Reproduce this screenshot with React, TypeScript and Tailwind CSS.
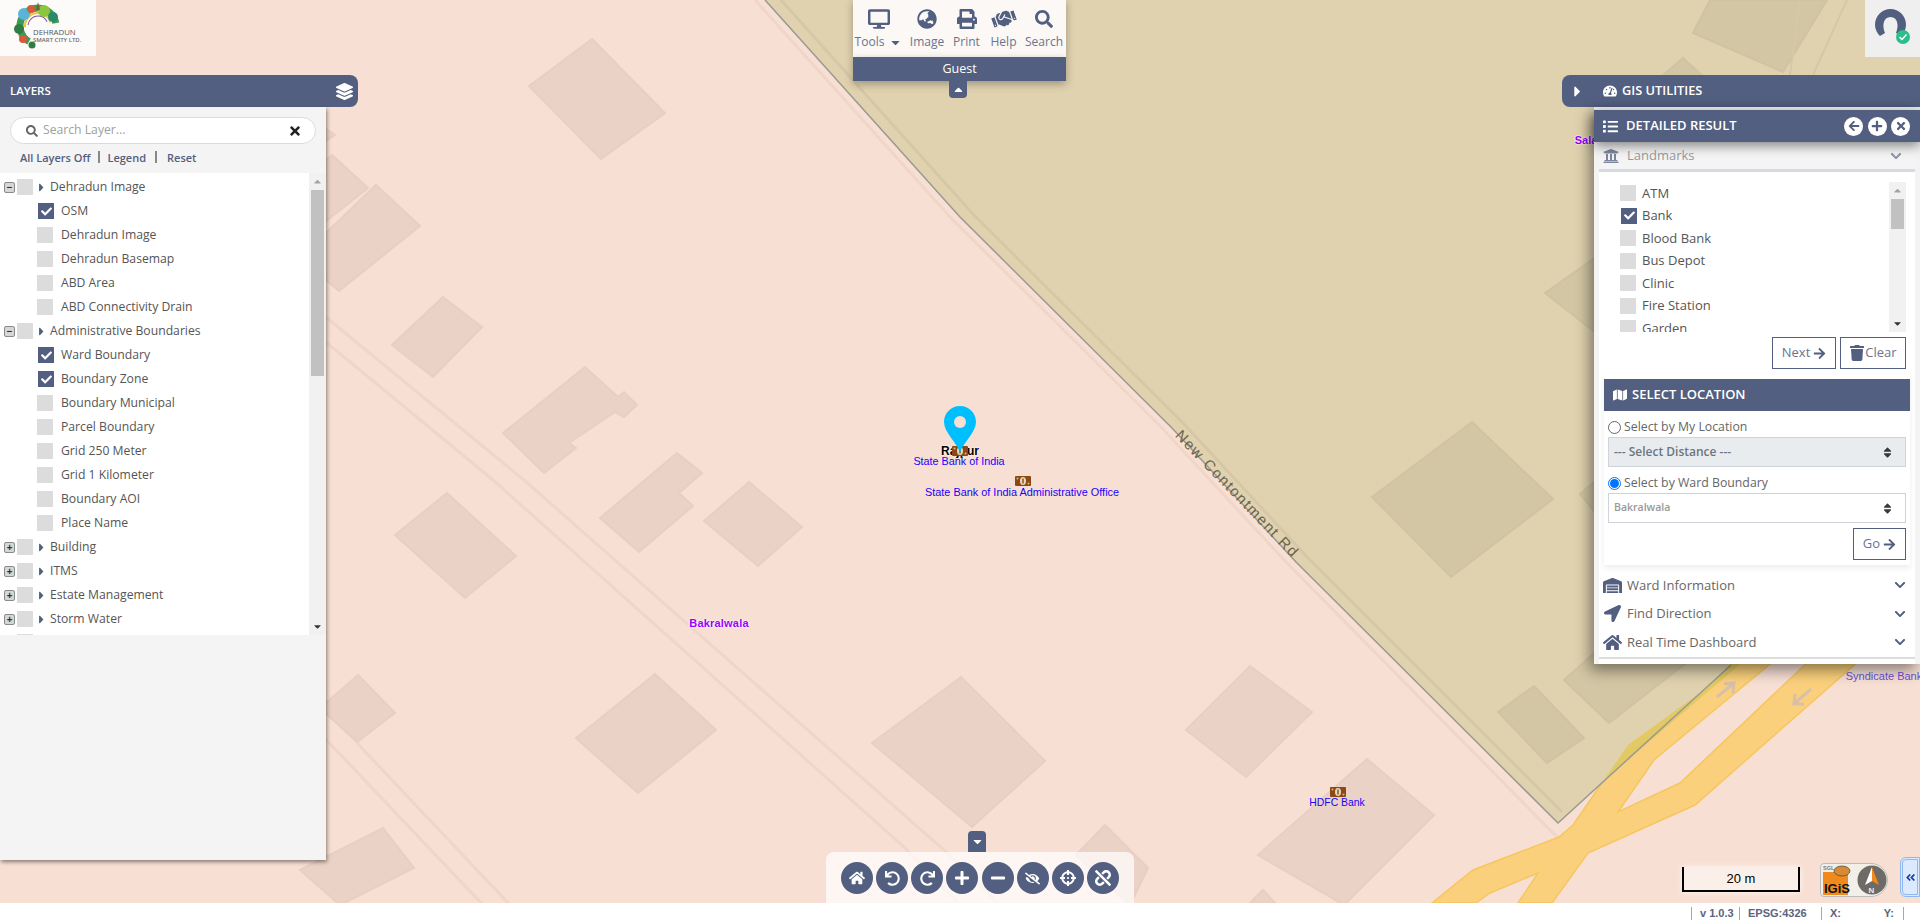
import {
  FaDesktop, FaGlobeAsia, FaPrint, FaHandshake, FaSearch, FaLayerGroup, FaTimes, FaCaretRight, FaCaretDown, FaCaretUp,
  FaCheck, FaTachometerAlt, FaList, FaArrowLeft, FaPlus, FaUniversity, FaChevronDown, FaArrowRight, FaTrash, FaMap,
  FaSort, FaWarehouse, FaLocationArrow, FaHome, FaUndo, FaRedo, FaMinus, FaEyeSlash, FaCrosshairs, FaUnlink, FaAngleDoubleLeft,
} from 'react-icons/fa';

const pinkBuildings = [
  '592,39 665,113 601,159 529,86',
  '332,155 368,188 325,222 290,190',
  '376,185 420,226 339,291 300,258',
  '320,125 335,135 320,145',
  '443,297 482,327 433,377 392,345',
  '585,367 618,397 624,392 637,405 624,417 615,412 569,443 576,448 544,473 503,433',
  '677,453 702,473 679,493 693,506 639,552 600,518',
  '749,482 802,527 758,566 704,521',
  '447,493 516,556 465,598 395,535',
  '655,674 716,730 638,793 576,738',
  '358,675 395,713 357,742 320,708',
  '383,828 414,868 340,905 300,870',
  '961,677 1045,761 972,827 872,743',
  '1250,666 1312,712 1246,777 1186,730',
  '1367,759 1434,815 1344,905 1258,855',
  '1105,825 1148,868 1130,905 1076,855',
  '1263,890 1275,903 1250,903',
];

const tanBuildings = [
  '1472,422 1553,499 1451,577 1372,497',
  '1545,293 1620,240 1650,310 1600,336',
  '1580,494 1620,460 1650,500 1610,530',
  '1534,686 1584,738 1547,763 1498,712',
  '1564,680 1609,723 1690,660 1620,630',
  '1710,0 1693,33 1783,72 1827,0',
  '1683,58 1660,78 1705,78',
];

const roadLines = [
  'M300,296 L327,318 L524,480 L944,850 L1000,905',
  'M300,321 L327,343 L493,480 L904,847 L960,905',
  'M357,743 L510,905',
  'M320,733 L483,905',
];

const rootLayers: [string, string[]][] = [
  ['Dehradun Image', ['*OSM', 'Dehradun Image', 'Dehradun Basemap', 'ABD Area', 'ABD Connectivity Drain']],
  ['Administrative Boundaries', ['*Ward Boundary', '*Boundary Zone', 'Boundary Municipal', 'Parcel Boundary', 'Grid 250 Meter', 'Grid 1 Kilometer', 'Boundary AOI', 'Place Name']],
  ['Building', []],
  ['ITMS', []],
  ['Estate Management', []],
  ['Storm Water', []],
];

const landmarks = ['ATM', '*Bank', 'Blood Bank', 'Bus Depot', 'Clinic', 'Fire Station', 'Garden'];

const Box = ({ checked }: { checked?: boolean }) => (
  <span className={`flex h-4 w-4 shrink-0 items-center justify-center ${checked ? '-mr-px ml-px bg-[#535f80]' : 'bg-[#dcdcdc]'}`}>
    {checked && <FaCheck className="text-[11px] text-white" />}
  </span>
);

const Expander = ({ open }: { open: boolean }) => (
  <span className="flex h-[11px] w-[11px] shrink-0 items-center justify-center rounded-[2px] border border-[#8a8a8a] bg-[#d6d6d6] text-[10px] leading-none font-bold text-[#333]">
    {open ? '−' : '+'}
  </span>
);

const MapLabel = ({ x, y, className, children }: { x: number; y: number; className: string; children: string }) => (
  <span
    className={`absolute -translate-x-1/2 -translate-y-1/2 font-['Liberation_Sans',Arial,sans-serif] whitespace-nowrap ${className}`}
    style={{ left: x, top: y }}
  >
    {children}
  </span>
);

const BankIcon = ({ x, y }: { x: number; y: number }) => (
  <svg className="absolute" style={{ left: x - 8, top: y - 5 }} width="16" height="10" viewBox="0 0 16 10">
    <rect width="16" height="10" rx="1" fill="#8a4a14" />
    <ellipse cx="8" cy="5" rx="3" ry="4" fill="#e9d8c0" />
    <rect x="7.3" y="2.5" width="1.4" height="5" fill="#8a4a14" />
    <circle cx="2.5" cy="2.5" r="1" fill="#d9b48c" />
    <circle cx="13.5" cy="7.5" r="1" fill="#d9b48c" />
  </svg>
);

const TopTool = ({ icon: Icon, label, size, caret, w }: { icon: any; label: string; size: string; caret?: boolean; w: string }) => (
  <div className={`flex flex-col items-center ${w}`}>
    <div className="flex h-[31px] items-center justify-center text-[#535f80]">
      <Icon className={size} />
    </div>
    <div className="flex items-center text-[12px] leading-[16px] text-[#6a7490]">
      {label}
      {caret && <FaCaretDown className="ml-[5px] text-[13px] text-[#535f80]" />}
    </div>
  </div>
);

const RoundButton = ({ icon: Icon, size = 'text-[16px]' }: { icon: any; size?: string }) => (
  <div className="flex h-8 w-8 items-center justify-center rounded-full bg-[#535f80] text-white">
    <Icon className={size} />
  </div>
);

const Accordion = ({ icon: Icon, label }: { icon: any; label: string }) => (
  <div className="flex h-[28.5px] items-center px-[4px] text-[13px] text-[#666]">
    <Icon className="w-[19px] text-[17px] text-[#535f80]" />
    <span className="ml-[5px] flex-1">{label}</span>
    <FaChevronDown className="mr-[5px] text-[12px] text-[#535f80]" />
  </div>
);

const LayersPanel = () => (
  <div className="absolute top-[75px] left-0 z-10 w-[358px]">
    <div className="flex h-8 items-center justify-between rounded-r-lg bg-[#535f80] pr-[5px] pl-[10px] text-[11.5px] font-semibold text-white">
      LAYERS
      <FaLayerGroup className="text-[17px]" />
    </div>
    <div className="flex h-[753px] w-[326px] flex-col bg-[#f4f4f4] shadow-[1px_2px_4px_rgba(0,0,0,0.45)]">
      <div className="mx-[10px] mt-[10px] flex h-[27px] w-[306px] items-center rounded-full border border-[#dcdcdc] bg-white pr-[13px] pl-[15px] text-[12.2px] text-[#a0a0a0]">
        <FaSearch className="mr-[5px] text-[12px] text-[#666]" />
        <span className="flex-1">Search Layer...</span>
        <FaTimes className="text-[14px] text-[#222]" />
      </div>
      <div className="mt-[3px] mb-[3px] flex h-[23px] items-center pl-[20px] text-[11px] font-semibold text-[#535f80]">
        <span>All Layers Off</span>
        <span className="mr-[7px] mb-[3px] ml-[8px] h-[12px] w-[2px] bg-[#888]" />
        <span>Legend</span>
        <span className="mr-[10px] mb-[3px] ml-[9px] h-[12px] w-[2px] bg-[#888]" />
        <span>Reset</span>
      </div>
      <div className="flex h-[462px] overflow-hidden bg-white">
        <div className="h-full flex-1 overflow-hidden pt-[2px]">
          {rootLayers.map(([name, children]) => (
            <div key={name}>
              <div className="flex h-6 items-center pl-[4px] text-[12.2px] text-[#555]">
                <Expander open={children.length > 0} />
                <span className="ml-[2px]"><Box /></span>
                <FaCaretRight className="ml-[5px] w-[7px] text-[13px] text-[#535f80]" />
                <span className="ml-[5px]">{name}</span>
              </div>
              {children.map((c) => (
                <div key={c} className="flex h-6 items-center pl-[37px] text-[12.2px] text-[#555]">
                  <Box checked={c.startsWith('*')} />
                  <span className="ml-2">{c.replace('*', '')}</span>
                </div>
              ))}
            </div>
          ))}
          {/* next group, only the top of its checkbox shows */}
          <div className="-mt-px flex h-6 items-center pl-[17px]"><Box /></div>
        </div>
        <div className="flex h-full w-[17px] flex-col items-center bg-[#f1f1f1]">
          <div className="flex h-[17px] items-center"><FaCaretUp className="text-[11px] text-[#a3a3a3]" /></div>
          <div className="h-[186px] w-[13px] bg-[#c1c1c1]" />
          <div className="flex-1" />
          <div className="flex h-[17px] items-center"><FaCaretDown className="text-[11px] text-[#333]" /></div>
        </div>
      </div>
    </div>
  </div>
);

const TopMenu = () => (
  <div className="absolute top-0 left-[853px] z-10 flex w-[213px] flex-col">
    <div className="h-[57px] bg-[#fbf8f5] shadow-[0_2px_8px_rgba(0,0,0,0.3)]">
      <div className="flex items-start pt-[3px] pl-[2px]">
        <TopTool icon={FaDesktop} label="Tools" size="text-[22px]" caret w="w-[47px]" />
        <TopTool icon={FaGlobeAsia} label="Image" size="text-[20px]" w="w-[50px]" />
        <TopTool icon={FaPrint} label="Print" size="text-[20px]" w="w-[29px]" />
        <TopTool icon={FaHandshake} label="Help" size="text-[24px] -rotate-[20deg]" w="w-[45px]" />
        <TopTool icon={FaSearch} label="Search" size="text-[18px]" w="w-[36px]" />
      </div>
    </div>
    <div className="flex h-6 items-center justify-center bg-[#535f80] text-[12.5px] text-white shadow-[0_3px_8px_rgba(0,0,0,0.3)]">Guest</div>
    <div className="ml-[96px] flex h-[17px] w-[18px] items-center justify-center rounded-b-[4px] bg-[#535f80] text-white">
      <FaCaretUp className="text-[13px]" />
    </div>
  </div>
);

const SelectBox = ({ label, muted }: { label: string; muted?: boolean }) => (
  <div className={`flex h-[30px] items-center border border-[#ced4da] pr-[11px] pl-[5px] font-semibold ${muted ? 'bg-[#e9ecef] text-[12px] text-[#6c757d]' : 'bg-white text-[10.5px] text-[#999]'}`}>
    <span className="flex-1">{label}</span>
    <FaSort className="text-[13px] text-[#343a40]" />
  </div>
);

const OutlineButton = ({ className, children }: { className: string; children: React.ReactNode }) => (
  <div className={`flex h-8 items-center justify-center border border-[#535f80] bg-white text-[13px] text-[#6a7490] ${className}`}>
    {children}
  </div>
);

const ResultPanel = () => (
  <div className="absolute top-[75px] left-[1562px] z-10 w-[358px]">
    <div className="flex h-8 items-center rounded-l-lg bg-[#535f80] text-[12.8px] font-semibold text-white">
      <FaCaretRight className="ml-[7px] text-[17px]" />
      <FaTachometerAlt className="ml-[17px] text-[14px]" />
      <span className="ml-[5px]">GIS UTILITIES</span>
    </div>
    <div className="ml-[32px] h-[557px] w-[326px] border-t-[3px] border-[#e8e8e8] bg-[#f3f3f3] shadow-[-4px_6px_14px_rgba(0,0,0,0.45)]">
      <div className="relative z-10 flex h-8 items-center bg-[#535f80] pr-[10px] pl-[9px] text-[13px] font-semibold text-white shadow-[0_4px_12px_rgba(0,0,0,0.45)]">
        <FaList className="text-[15px]" />
        <span className="ml-2 flex-1">DETAILED RESULT</span>
        <div className="flex gap-[4.5px]">
          {[FaArrowLeft, FaPlus, FaTimes].map((Icon, i) => (
            <span key={i} className="flex h-[19px] w-[19px] items-center justify-center rounded-full bg-white text-[#535f80]">
              <Icon className="text-[12px]" />
            </span>
          ))}
        </div>
      </div>
      <div className="mx-[5px] h-[522px] bg-white">
        <div className="flex h-[30px] items-center border-b-[3px] border-[#d5d9e2] bg-[#f4f4f5] pr-[13px] pl-[4px] text-[13px] text-[#999]">
          <FaUniversity className="text-[16px] text-[#7d859d]" />
          <span className="ml-2 flex-1">Landmarks</span>
          <FaChevronDown className="text-[12px] text-[#8a90a3]" />
        </div>
        <div className="mt-[10px] flex h-[150px] pl-[21px]">
          <div className="flex-1 overflow-hidden">
            {landmarks.map((l) => (
              <div key={l} className="flex h-[22.5px] items-center text-[13px] text-[#555]">
                <Box checked={l.startsWith('*')} />
                <span className="ml-[6px]">{l.replace('*', '')}</span>
              </div>
            ))}
          </div>
          <div className="mr-[9px] flex h-full w-[17px] flex-col items-center bg-[#f1f1f1]">
            <div className="flex h-[17px] items-center"><FaCaretUp className="text-[11px] text-[#a3a3a3]" /></div>
            <div className="h-[30px] w-[13px] bg-[#c1c1c1]" />
            <div className="flex-1" />
            <div className="flex h-[17px] items-center"><FaCaretDown className="text-[11px] text-[#333]" /></div>
          </div>
        </div>
        <div className="mt-[5px] flex justify-end gap-1 pr-[9px]">
          <OutlineButton className="w-16">Next<FaArrowRight className="ml-[3px] text-[13px] text-[#535f80]" /></OutlineButton>
          <OutlineButton className="w-[66px]"><FaTrash className="text-[16px] text-[#535f80]" />Clear</OutlineButton>
        </div>
        <div className="mx-[5px] mt-[5px] h-[191px] bg-white pt-[5px] shadow-[0_3px_6px_rgba(0,0,0,0.08)]">
          <div className="flex h-8 items-center bg-[#535f80] pl-[9px] text-[13px] font-semibold text-white">
            <FaMap className="text-[14px]" />
            <span className="ml-[5px]">SELECT LOCATION</span>
          </div>
          <div className="px-1">
            <div className="flex h-[26px] items-center pt-[6px] text-[12.3px] text-[#666]">
              <span className="h-[13px] w-[13px] rounded-full border border-[#666] bg-white" />
              <span className="ml-[3px]">Select by My Location</span>
            </div>
            <SelectBox label="--- Select Distance ---" muted />
            <div className="flex h-[26px] items-center pt-[6px] text-[12.3px] text-[#666]">
              <span className="flex h-[13px] w-[13px] items-center justify-center rounded-full border border-[#0075ff] bg-white">
                <span className="h-[9px] w-[9px] rounded-full bg-[#0075ff]" />
              </span>
              <span className="ml-[3px]">Select by Ward Boundary</span>
            </div>
            <SelectBox label="Bakralwala" />
            <div className="mt-[5px] flex justify-end">
              <OutlineButton className="w-[53px]">Go<FaArrowRight className="ml-[3px] text-[13px] text-[#535f80]" /></OutlineButton>
            </div>
          </div>
        </div>
        <div className="mt-[6px] border-b-2 border-[#ddd]">
          <Accordion icon={FaWarehouse} label="Ward Information" />
          <Accordion icon={FaLocationArrow} label="Find Direction" />
          <Accordion icon={FaHome} label="Real Time Dashboard" />
        </div>
      </div>
    </div>
  </div>
);

const MapLayer = () => (
  <svg className="absolute inset-0" width="1920" height="903" viewBox="0 0 1920 903">
    <rect width="1920" height="903" fill="#f7dfd3" />
    {roadLines.map((d) => (
      <path key={d} d={d} fill="none" stroke="#efd6c9" strokeWidth="3" />
    ))}
    {pinkBuildings.map((p) => (
      <polygon key={p} points={p} fill="#ebd2c6" stroke="#e8cfc2" strokeWidth="2" />
    ))}
    <path d="M755,0 L950,217 L1162,428 L1286,562 L1552,832 L1559,838" fill="none" stroke="#efd6c9" strokeWidth="3" />
    <path
      d="M1731,660 L1604,780 L1573,825 L1559,837 L1473,870 L1432,903 L1476,903 L1490,893 L1538,873 L1518,903 L1552,903 L1588,853 L1695,805 L1860,660 L1810,660 L1680,783 L1618,812 L1654,760 L1775,660 Z"
      fill="#fad07c"
      stroke="#f6c65f"
      strokeWidth="1.5"
    />
    <polygon points="765,0 960,217 1172,428 1296,562 1558,823 1920,494 1920,0" fill="#e0d2af" />
    {tanBuildings.map((p) => (
      <polygon key={p} points={p} fill="#d3c6a4" stroke="#d0c3a1" strokeWidth="2" />
    ))}
    <polygon points="1604,780 1628,745 1704,690 1735,660 1745,660" fill="#e2c964" />
    <path d="M781,0 L972,213 L1184,424 L1308,558 L1562,812" fill="none" stroke="#d6c8a6" strokeWidth="3" />
    <path d="M1847,0 L1813,75 M1800,0 L1790,75" fill="none" stroke="#d6c8a6" strokeWidth="2" />
    <polyline points="765,0 960,217 1172,428 1296,562 1558,823 1731,665" fill="none" stroke="#9a9a90" strokeWidth="1.5" />
    <path d="M1717,697 L1733,684 M1724,684 L1734,683 L1733,693" fill="none" stroke="#d9bfa9" strokeWidth="3" />
    <path d="M1811,689 L1795,703 M1795,694 L1794,704 L1804,704" fill="none" stroke="#d9bfa9" strokeWidth="3" />
  </svg>
);

const MapLabels = () => (
  <>
    <MapLabel x={960} y={451} className="text-[12px] font-bold text-black [text-shadow:0_0_2px_#fff,0_0_2px_#fff]">Rajpur</MapLabel>
    <BankIcon x={960} y={451} />
    <MapLabel x={959} y={461} className="text-[10.8px] text-[#2200ff]">State Bank of India</MapLabel>
    <svg className="absolute top-[405px] left-[943px]" width="34" height="48" viewBox="0 0 34 48">
      <path d="M17,47 C13,37 1,27 1,17 C1,8 8,1 17,1 C26,1 33,8 33,17 C33,27 21,37 17,47 Z" fill="#00bfff" />
      <circle cx="17" cy="17" r="6" fill="#f7dfd3" />
    </svg>
    <BankIcon x={1023} y={481} />
    <MapLabel x={1022} y={492} className="text-[10.9px] text-[#2200ff]">State Bank of India Administrative Office</MapLabel>
    <BankIcon x={1338} y={792} />
    <MapLabel x={1337} y={803} className="text-[10.4px] text-[#2200ff]">HDFC Bank</MapLabel>
    <MapLabel x={1884} y={676} className="text-[11px] text-[#6a50e0]">Syndicate Bank</MapLabel>
    <MapLabel x={719} y={623} className="text-[11px] font-bold tracking-[0.2px] text-[#9900ff] [text-shadow:0_0_2px_#fff,0_0_2px_#fff]">Bakralwala</MapLabel>
    <MapLabel x={1586} y={140} className="text-[11px] font-bold text-[#9900ff] [text-shadow:0_0_2px_#fff,0_0_2px_#fff]">Sala</MapLabel>
    <MapLabel x={1237} y={494} className="rotate-[46deg] text-[15px] tracking-[1.5px] text-[#6b6450]">New Contontment Rd</MapLabel>
  </>
);

const CityLogo = () => (
  <div className="absolute top-0 left-0 z-10 h-14 w-24 bg-[#fdfbf9]">
    <svg width="96" height="56" viewBox="0 0 96 56">
      <circle cx="38" cy="26" r="18" fill="none" stroke="#3d9a54" strokeWidth="7" strokeDasharray="72 50" transform="rotate(120 38 26)" />
      <circle cx="38" cy="26" r="13" fill="none" stroke="#e8c53c" strokeWidth="2" strokeDasharray="38 60" transform="rotate(175 38 26)" />
      <circle cx="38" cy="26" r="10" fill="none" stroke="#7a4fa0" strokeWidth="1" strokeDasharray="26 60" transform="rotate(185 38 26)" />
      <circle cx="24" cy="14" r="6" fill="#58b5d8" />
      <circle cx="31" cy="9" r="4" fill="#d75b3a" />
      <circle cx="44" cy="11" r="6" fill="#8cc63f" />
      <circle cx="53" cy="17" r="5" fill="#2c8a6b" />
      <circle cx="19" cy="29" r="5" fill="#2f7d44" />
      <circle cx="23" cy="39" r="4" fill="#d75b3a" />
      <circle cx="32" cy="45" r="3.5" fill="#2f7d44" />
      <path d="M38,2 L36,10 L40,10 Z" fill="#7a5b3d" />
      <text x="33" y="35" fontFamily="Open Sans, sans-serif" fontSize="7.8" fill="#55565a">DEHRADUN</text>
      <text x="33" y="41.5" fontFamily="Open Sans, sans-serif" fontSize="6" fontWeight="600" fill="#6a6b6f">SMART CITY LTD.</text>
    </svg>
  </div>
);

const Avatar = () => (
  <div className="absolute top-0 left-[1865px] z-10 h-[57px] w-[55px] bg-[#efefef]">
    <svg width="55" height="57" viewBox="0 0 55 57">
      <path d="M15,36 A15.5,15.5 0 1 1 36,36 L31,33 C34,26 33,17 25.5,17 C18,17 17,26 20,33 Z" fill="#535f80" />
      <circle cx="38" cy="37" r="7" fill="#2dbd8b" />
      <path d="M34.5,37 L37,39.5 L41.5,34.5" fill="none" stroke="#fff" strokeWidth="1.5" />
    </svg>
  </div>
);

const BottomToolbar = () => (
  <div className="absolute top-[831px] left-[826px] z-10 flex w-[308px] flex-col">
    <div className="ml-[142px] flex h-[21px] w-[18px] items-center justify-center rounded-t-[4px] bg-[#535f80] text-white">
      <FaCaretDown className="text-[13px]" />
    </div>
    <div className="flex h-[51px] w-full justify-center gap-[3.14px] rounded-t-lg bg-white/70 pt-[10px]">
      <RoundButton icon={FaHome} />
      <RoundButton icon={FaUndo} size="text-[15px]" />
      <RoundButton icon={FaRedo} size="text-[15px]" />
      <RoundButton icon={FaPlus} />
      <RoundButton icon={FaMinus} />
      <RoundButton icon={FaEyeSlash} size="text-[15px]" />
      <RoundButton icon={FaCrosshairs} />
      <RoundButton icon={FaUnlink} />
    </div>
  </div>
);

const MapFooter = () => (
  <div className="absolute top-[857px] left-[1682px] z-10 flex items-start font-['Liberation_Sans',Arial,sans-serif]">
    <div className="mt-[10px] flex h-[25px] w-[118px] items-center justify-center border-x-2 border-b-2 border-black bg-white/50 text-[13px] text-black shadow-[0_0_6px_rgba(255,255,255,0.8)]">
      20 m
    </div>
    <svg className="mt-[6px] ml-[20px]" width="68" height="34" viewBox="0 0 68 34">
      <path d="M4,0.5 L51,0.5 A16.5,16.5 0 0 1 51,33.5 L4,33.5 A3.5,3.5 0 0 1 0.5,30 L0.5,4 A3.5,3.5 0 0 1 4,0.5 Z" fill="#f2efe9" stroke="#bbb" />
      <path d="M3,9 L28,9 L28,32 L3,32 Z" fill="#f08a1c" />
      <text x="3" y="7" fontSize="5.5" fontWeight="bold" fill="#777">SGL</text>
      <ellipse cx="22" cy="8" rx="8" ry="5" fill="#d78a33" stroke="#444" strokeWidth="0.7" />
      <text x="4" y="30" fontSize="13" fontWeight="bold" fill="#111">IGiS</text>
      <circle cx="52" cy="17" r="14.5" fill="#6e6a66" />
      <polygon points="52,4 45,22 52,18" fill="#fff" />
      <polygon points="52,4 59,22 52,18" fill="#f08a1c" />
      <text x="48.5" y="30" fontSize="8" fontWeight="bold" fill="#eee">N</text>
    </svg>
    <div className="ml-3 flex h-10 w-5 items-center justify-center rounded-l-md border border-[#8fb8f0] bg-[#dceaff] text-[#1a3f9c] outline outline-1 -outline-offset-3 outline-[#8fb8f0]">
      <FaAngleDoubleLeft className="text-[11px]" />
    </div>
  </div>
);

const StatusBar = () => (
  <div className="flex h-[21px] items-center bg-white pl-[1691px] font-['Liberation_Sans',Arial,sans-serif] text-[11px] font-bold text-[#5a6480]">
    <span className="flex h-[13px] w-[48px] items-center border-l border-[#a8b560] pl-2 leading-none">v 1.0.3</span>
    <span className="flex h-[13px] w-[82px] items-center border-l border-[#a8b560] pl-2 leading-none">EPSG:4326</span>
    <span className="flex h-[13px] w-[83px] items-center justify-between border-x border-[#a8b560] pr-[9px] pl-2 leading-none">
      <span>X:</span>
      <span>Y:</span>
    </span>
  </div>
);

export default function App() {
  return (
    <div className="flex h-[924px] w-[1920px] flex-col overflow-hidden bg-white font-['Open_Sans',sans-serif]">
      <div className="relative h-[903px] overflow-hidden">
        <MapLayer />
        <MapLabels />
        <CityLogo />
        <Avatar />
        <TopMenu />
        <LayersPanel />
        <ResultPanel />
        <BottomToolbar />
        <MapFooter />
      </div>
      <StatusBar />
    </div>
  );
}
